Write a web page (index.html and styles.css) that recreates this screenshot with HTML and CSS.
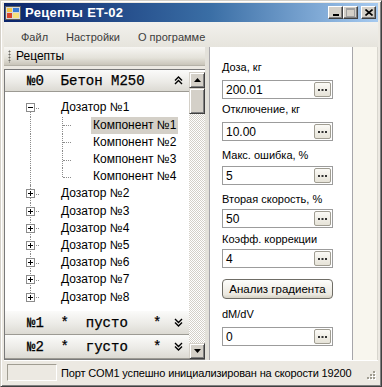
FILE: index.html
```html
<!DOCTYPE html>
<html lang="ru">
<head>
<meta charset="utf-8">
<title>Рецепты ET-02</title>
<link rel="stylesheet" href="styles.css">
</head>
<body>
<div class="window">
  <div class="titlebar">
    <svg class="appicon" width="16" height="16" viewBox="0 0 16 16">
      <rect x="0.5" y="1.5" width="15" height="13" fill="#d8d8d8" stroke="#5a5a5a"/>
      <rect x="2" y="3" width="5" height="4" fill="#f4c542"/>
      <rect x="8" y="3" width="6" height="4" fill="#3a7bd5"/>
      <rect x="2" y="8" width="5" height="5" fill="#d9442b"/>
      <rect x="8" y="8" width="6" height="5" fill="#f4e07a"/>
    </svg>
    <span class="title">Рецепты ET-02</span>
    <div class="capbtns">
      <span class="capbtn"><svg width="8" height="7" viewBox="0 0 8 7"><rect x="1" y="5" width="6" height="2" fill="#000"/></svg></span>
      <span class="capbtn"><svg width="9" height="9" viewBox="0 0 9 9"><rect x="0.5" y="0.5" width="8" height="8" fill="none" stroke="#a0a0a0"/><rect x="0" y="0" width="9" height="2" fill="#a0a0a0"/></svg></span>
      <span class="capbtn close"><svg width="8" height="7" viewBox="0 0 8 7"><path d="M0.5 0.5L7.5 6.5M7.5 0.5L0.5 6.5" stroke="#000" stroke-width="1.6"/></svg></span>
    </div>
  </div>
  <div class="menubar">
    <span class="menuitem">Файл</span>
    <span class="menuitem">Настройки</span>
    <span class="menuitem">О программе</span>
  </div>
  <div class="main">
    <div class="left">
      <div class="toolstrip">
        <span class="grip"></span>
        <span class="tslabel">Рецепты</span>
      </div>
      <div class="leftbody">
        <div class="list">
          <div class="ghead">
            <span class="gtext">№0  Бетон М250</span>
            <svg class="chev" width="9" height="9" viewBox="0 0 9 9"><path d="M1 4.5L4.5 1L8 4.5M1 8L4.5 4.5L8 8" fill="none" stroke="#000" stroke-width="1.4"/></svg>
          </div>
          <div class="tree">
            <div class="trow root"><span class="lane"><span class="box minus"></span></span><span class="tlabel">Дозатор №1</span></div>
            <div class="trow child sel"><span class="lane pass"></span><span class="lane leaf"></span><span class="tlabel">Компонент №1</span></div>
            <div class="trow child"><span class="lane pass"></span><span class="lane leaf"></span><span class="tlabel">Компонент №2</span></div>
            <div class="trow child"><span class="lane pass"></span><span class="lane leaf"></span><span class="tlabel">Компонент №3</span></div>
            <div class="trow child"><span class="lane pass"></span><span class="lane leaf last"></span><span class="tlabel">Компонент №4</span></div>
            <div class="trow root"><span class="lane"><span class="box"></span></span><span class="tlabel">Дозатор №2</span></div>
            <div class="trow root"><span class="lane"><span class="box"></span></span><span class="tlabel">Дозатор №3</span></div>
            <div class="trow root"><span class="lane"><span class="box"></span></span><span class="tlabel">Дозатор №4</span></div>
            <div class="trow root"><span class="lane"><span class="box"></span></span><span class="tlabel">Дозатор №5</span></div>
            <div class="trow root"><span class="lane"><span class="box"></span></span><span class="tlabel">Дозатор №6</span></div>
            <div class="trow root"><span class="lane"><span class="box"></span></span><span class="tlabel">Дозатор №7</span></div>
            <div class="trow root lastroot"><span class="lane"><span class="box"></span></span><span class="tlabel">Дозатор №8</span></div>
          </div>
          <div class="ghead low">
            <span class="gtext">№1  *  пусто   *</span>
            <svg class="chev" width="9" height="9" viewBox="0 0 9 9"><path d="M1 1L4.5 4.5L8 1M1 4.5L4.5 8L8 4.5" fill="none" stroke="#000" stroke-width="1.4"/></svg>
          </div>
          <div class="ghead low">
            <span class="gtext">№2  *  густо   *</span>
            <svg class="chev" width="9" height="9" viewBox="0 0 9 9"><path d="M1 1L4.5 4.5L8 1M1 4.5L4.5 8L8 4.5" fill="none" stroke="#000" stroke-width="1.4"/></svg>
          </div>
        </div>
        <div class="vscroll">
          <span class="sbtn"><svg width="7" height="4" viewBox="0 0 7 4"><path d="M0 4L3.5 0L7 4Z" fill="#000"/></svg></span>
          <span class="thumb"></span>
          <span class="track"></span>
          <span class="sbtn"><svg width="7" height="4" viewBox="0 0 7 4"><path d="M0 0L3.5 4L7 0Z" fill="#000"/></svg></span>
        </div>
      </div>
    </div>
    <div class="right">
      <div class="props">
        <div class="field f1">
          <span class="flabel">Доза, кг</span>
          <div class="inp"><span class="val">200.01</span><span class="dots"><svg width="9" height="2" viewBox="0 0 9 2"><rect x="0" y="0" width="2" height="2" fill="#333"/><rect x="3.5" y="0" width="2" height="2" fill="#333"/><rect x="7" y="0" width="2" height="2" fill="#333"/></svg></span></div>
        </div>
        <div class="field f2">
          <span class="flabel">Отключение, кг</span>
          <div class="inp"><span class="val">10.00</span><span class="dots"><svg width="9" height="2" viewBox="0 0 9 2"><rect x="0" y="0" width="2" height="2" fill="#333"/><rect x="3.5" y="0" width="2" height="2" fill="#333"/><rect x="7" y="0" width="2" height="2" fill="#333"/></svg></span></div>
        </div>
        <div class="field f3">
          <span class="flabel">Макс. ошибка, %</span>
          <div class="inp"><span class="val">5</span><span class="dots"><svg width="9" height="2" viewBox="0 0 9 2"><rect x="0" y="0" width="2" height="2" fill="#333"/><rect x="3.5" y="0" width="2" height="2" fill="#333"/><rect x="7" y="0" width="2" height="2" fill="#333"/></svg></span></div>
        </div>
        <div class="field f4">
          <span class="flabel">Вторая скорость, %</span>
          <div class="inp"><span class="val">50</span><span class="dots"><svg width="9" height="2" viewBox="0 0 9 2"><rect x="0" y="0" width="2" height="2" fill="#333"/><rect x="3.5" y="0" width="2" height="2" fill="#333"/><rect x="7" y="0" width="2" height="2" fill="#333"/></svg></span></div>
        </div>
        <div class="field f5">
          <span class="flabel">Коэфф. коррекции</span>
          <div class="inp"><span class="val">4</span><span class="dots"><svg width="9" height="2" viewBox="0 0 9 2"><rect x="0" y="0" width="2" height="2" fill="#333"/><rect x="3.5" y="0" width="2" height="2" fill="#333"/><rect x="7" y="0" width="2" height="2" fill="#333"/></svg></span></div>
        </div>
        <div class="btn">Анализ градиента</div>
        <div class="field f6">
          <span class="flabel">dM/dV</span>
          <div class="inp"><span class="val">0</span><span class="dots"><svg width="9" height="2" viewBox="0 0 9 2"><rect x="0" y="0" width="2" height="2" fill="#333"/><rect x="3.5" y="0" width="2" height="2" fill="#333"/><rect x="7" y="0" width="2" height="2" fill="#333"/></svg></span></div>
        </div>
      </div>
      <div class="filler"></div>
    </div>
  </div>
  <div class="statusbar">
    <span class="spanel"></span>
    <span class="stext">Порт COM1 успешно инициализирован на скорости 19200</span>
    <svg class="sgrip" width="12" height="12" viewBox="0 0 12 12">
      <g fill="#fff"><rect x="9" y="2" width="2" height="2"/><rect x="6" y="5" width="2" height="2"/><rect x="9" y="5" width="2" height="2"/><rect x="3" y="8" width="2" height="2"/><rect x="6" y="8" width="2" height="2"/><rect x="9" y="8" width="2" height="2"/></g>
      <g fill="#a09d92"><rect x="8" y="1" width="2" height="2"/><rect x="5" y="4" width="2" height="2"/><rect x="8" y="4" width="2" height="2"/><rect x="2" y="7" width="2" height="2"/><rect x="5" y="7" width="2" height="2"/><rect x="8" y="7" width="2" height="2"/></g>
    </svg>
  </div>
</div>
</body>
</html>
```

FILE: styles.css
```css
* { box-sizing: border-box; margin: 0; padding: 0; }
html, body { width: 382px; height: 387px; overflow: hidden; background: #d4d0c8; }
body { font: 12px "Liberation Sans", Arial, sans-serif; color: #000; }

.window {
  width: 382px; height: 387px;
  display: flex; flex-direction: column;
  background: #ece9e2;
  border: 1px solid; border-color: #d4d0c8 #404040 #404040 #d4d0c8;
  box-shadow: inset 1px 1px 0 #fff, inset -1px -1px 0 #808080;
  padding: 2px 3px 2px 3px;
}

.titlebar {
  height: 19px; flex: none;
  display: flex; align-items: center;
  background: linear-gradient(to right, #0a246a 0%, #3a6ea5 55%, #a6caf0 100%);
  padding: 0 2px 0 1px;
}
.appicon { flex: none; }
.title { color: #fff; font-weight: bold; font-size: 13px; margin-left: 4px; flex: 1; letter-spacing: 0.3px; }
.capbtns { display: flex; align-items: center; }
.capbtn {
  width: 15px; height: 13px; background: #d4d0c8;
  border: 1px solid; border-color: #fff #404040 #404040 #fff;
  box-shadow: inset -1px -1px 0 #808080;
  display: flex; align-items: center; justify-content: center;
}
.capbtn.close { margin-left: 3px; }

.menubar {
  height: 25px; flex: none;
  display: flex; align-items: center;
  background: linear-gradient(to bottom, #f2f1ed, #e6e4dd);
  padding: 4px 0 0 8px; color: #3c3c3c; font-size: 11px;
}
.menuitem { padding: 0 9px; }

.main { flex: 1; display: flex; min-height: 0; }

.left { width: 205px; flex: none; display: flex; flex-direction: column; border-right: 4px solid #e3e1da; }
.toolstrip {
  height: 19px; flex: none; display: flex; align-items: center;
  background: linear-gradient(to bottom, #f7f6f3 0%, #e4e2da 60%, #c9c5b9 100%);
  border-bottom: 1px solid #b5b2a8;
}
.grip {
  width: 3px; height: 13px; margin: 0 5px 0 4px;
  background: radial-gradient(circle, #6e6c66 0.9px, transparent 1.1px) 0 0 / 3px 3px repeat-y;
}
.tslabel { color: #000; }

.leftbody { flex: 1; display: flex; min-height: 0; border: 1px solid #7a7a7a; border-right: none; margin-top: 3px; }
.list { flex: 1; display: flex; flex-direction: column; min-width: 0; background: #fff; }

.ghead {
  height: 22px; flex: none; display: flex; align-items: center;
  background: linear-gradient(to bottom, #fbfbfa 0%, #ecebe7 55%, #dcdad3 100%);
  border-bottom: 1px solid #9c9a93;
  padding-left: 22px; padding-right: 6px;
  font: 14px "Liberation Mono", "Courier New", monospace;
  -webkit-text-stroke: 0.25px #000;
}
.ghead.low { height: 24px; }
.gtext { white-space: pre; flex: 1; }
.chev { flex: none; }

.tree { flex: 1; padding: 7.4px 0 0 9px; background: #fff; }
.trow { height: 17.2px; display: flex; align-items: center; }
.lane { width: 32px; height: 100%; flex: none; position: relative; display: flex; align-items: center; justify-content: center; }
.lane::before { content: ""; position: absolute; left: 16px; top: 0; bottom: 0; border-left: 1px dotted #8c8c8c; }
.root:first-child .lane::before { top: 50%; }
.root.lastroot .lane::before { bottom: 50%; }
.root .lane::after, .leaf::after {
  content: ""; position: absolute; left: 17px; width: 8px; top: 50%; border-top: 1px dotted #8c8c8c;
}
.leaf.last::before { bottom: 50%; }
.box {
  width: 9px; height: 9px; background: #fff; border: 1px solid #8c8c8c; position: relative; z-index: 1;
}
.box::before { content: ""; position: absolute; left: 1px; top: 3px; width: 5px; height: 1px; background: #000; }
.box:not(.minus)::after { content: ""; position: absolute; left: 3px; top: 1px; width: 1px; height: 5px; background: #000; }
.tlabel { margin-left: 13px; padding: 1px 2px; line-height: 15px; white-space: nowrap; }
.child .tlabel { margin-left: 13px; }
.sel .tlabel { background: #d4d0c8; }

.vscroll { width: 16px; flex: none; display: flex; flex-direction: column; padding-top: 2px; background: #fff; }
.sbtn {
  height: 16px; flex: none; background: #d4d0c8;
  border: 1px solid; border-color: #d4d0c8 #404040 #404040 #d4d0c8;
  box-shadow: inset 1px 1px 0 #fff, inset -1px -1px 0 #808080;
  display: flex; align-items: center; justify-content: center;
}
.thumb {
  height: 26px; flex: none; background: #d4d0c8;
  border: 1px solid; border-color: #d4d0c8 #404040 #404040 #d4d0c8;
  box-shadow: inset 1px 1px 0 #fff, inset -1px -1px 0 #808080;
}
.track {
  flex: 1;
  background-color: #fff;
  background-image: linear-gradient(45deg, #d4d0c8 25%, transparent 25%, transparent 75%, #d4d0c8 75%), linear-gradient(45deg, #d4d0c8 25%, transparent 25%, transparent 75%, #d4d0c8 75%);
  background-size: 2px 2px; background-position: 0 0, 1px 1px;
}

.right { flex: 1; display: flex; }
.props {
  width: 144px; flex: none; background: #fff;
  border-left: 1px solid #a7a6aa; border-right: 1px solid #a7a6aa;
  padding: 13px 0 0 12px;
  display: flex; flex-direction: column;
  font-size: 11px;
}
.filler { flex: 1; background: #f8f6ee; border-right: 1px solid #d8d6ce; }
.field { display: flex; flex-direction: column; }
.flabel { line-height: 15px; height: 15px; color: #000; white-space: nowrap; }
.inp {
  margin-top: 4px; width: 111px; height: 19px;
  border: 1px solid #9c9c9c; background: #fff;
  display: flex; align-items: center; padding: 1px;
}
.f1 .inp { margin-top: 5px; }
.f2 { margin-top: 3px; }
.f2 .inp { margin-top: 5px; }
.f3 { margin-top: 7px; }
.f3 .inp { margin-top: 3px; }
.f4 { margin-top: 7px; }
.f4 .inp { margin-top: 2px; }
.f5 { margin-top: 4px; }
.f5 .inp { margin-top: 2px; }
.f6 { margin-top: 8px; }
.f6 .inp { margin-top: 5px; }
.val { flex: 1; padding-left: 2px; font-size: 12px; }
.dots {
  width: 17px; height: 15px; flex: none;
  border: 1px solid #a09d92; border-radius: 2px;
  background: linear-gradient(to bottom, #fbfaf6, #e6e3d8);
  display: flex; align-items: center; justify-content: center;
}
.btn {
  width: 111px; height: 20px; margin-top: 11px;
  border: 1px solid #6f6d66; border-radius: 4px;
  background: linear-gradient(to bottom, #fdfdfb, #ebe8df 80%, #d6d2c5);
  display: flex; align-items: center; justify-content: center;
  font-size: 11.5px;
}

.statusbar {
  height: 24px; flex: none; display: flex; align-items: center;
  background: #ece9e2; border-top: 1px solid #fff;
  padding-left: 3px; font-size: 11px;
}
.spanel {
  width: 50px; height: 17px; flex: none;
  border: 1px solid; border-color: #a09d92 #fff #fff #a09d92;
}
.stext { margin-left: 4px; flex: 1; white-space: nowrap; letter-spacing: -0.15px; }
.sgrip { flex: none; margin-right: 1px; align-self: flex-end; margin-bottom: 2px; }
```
